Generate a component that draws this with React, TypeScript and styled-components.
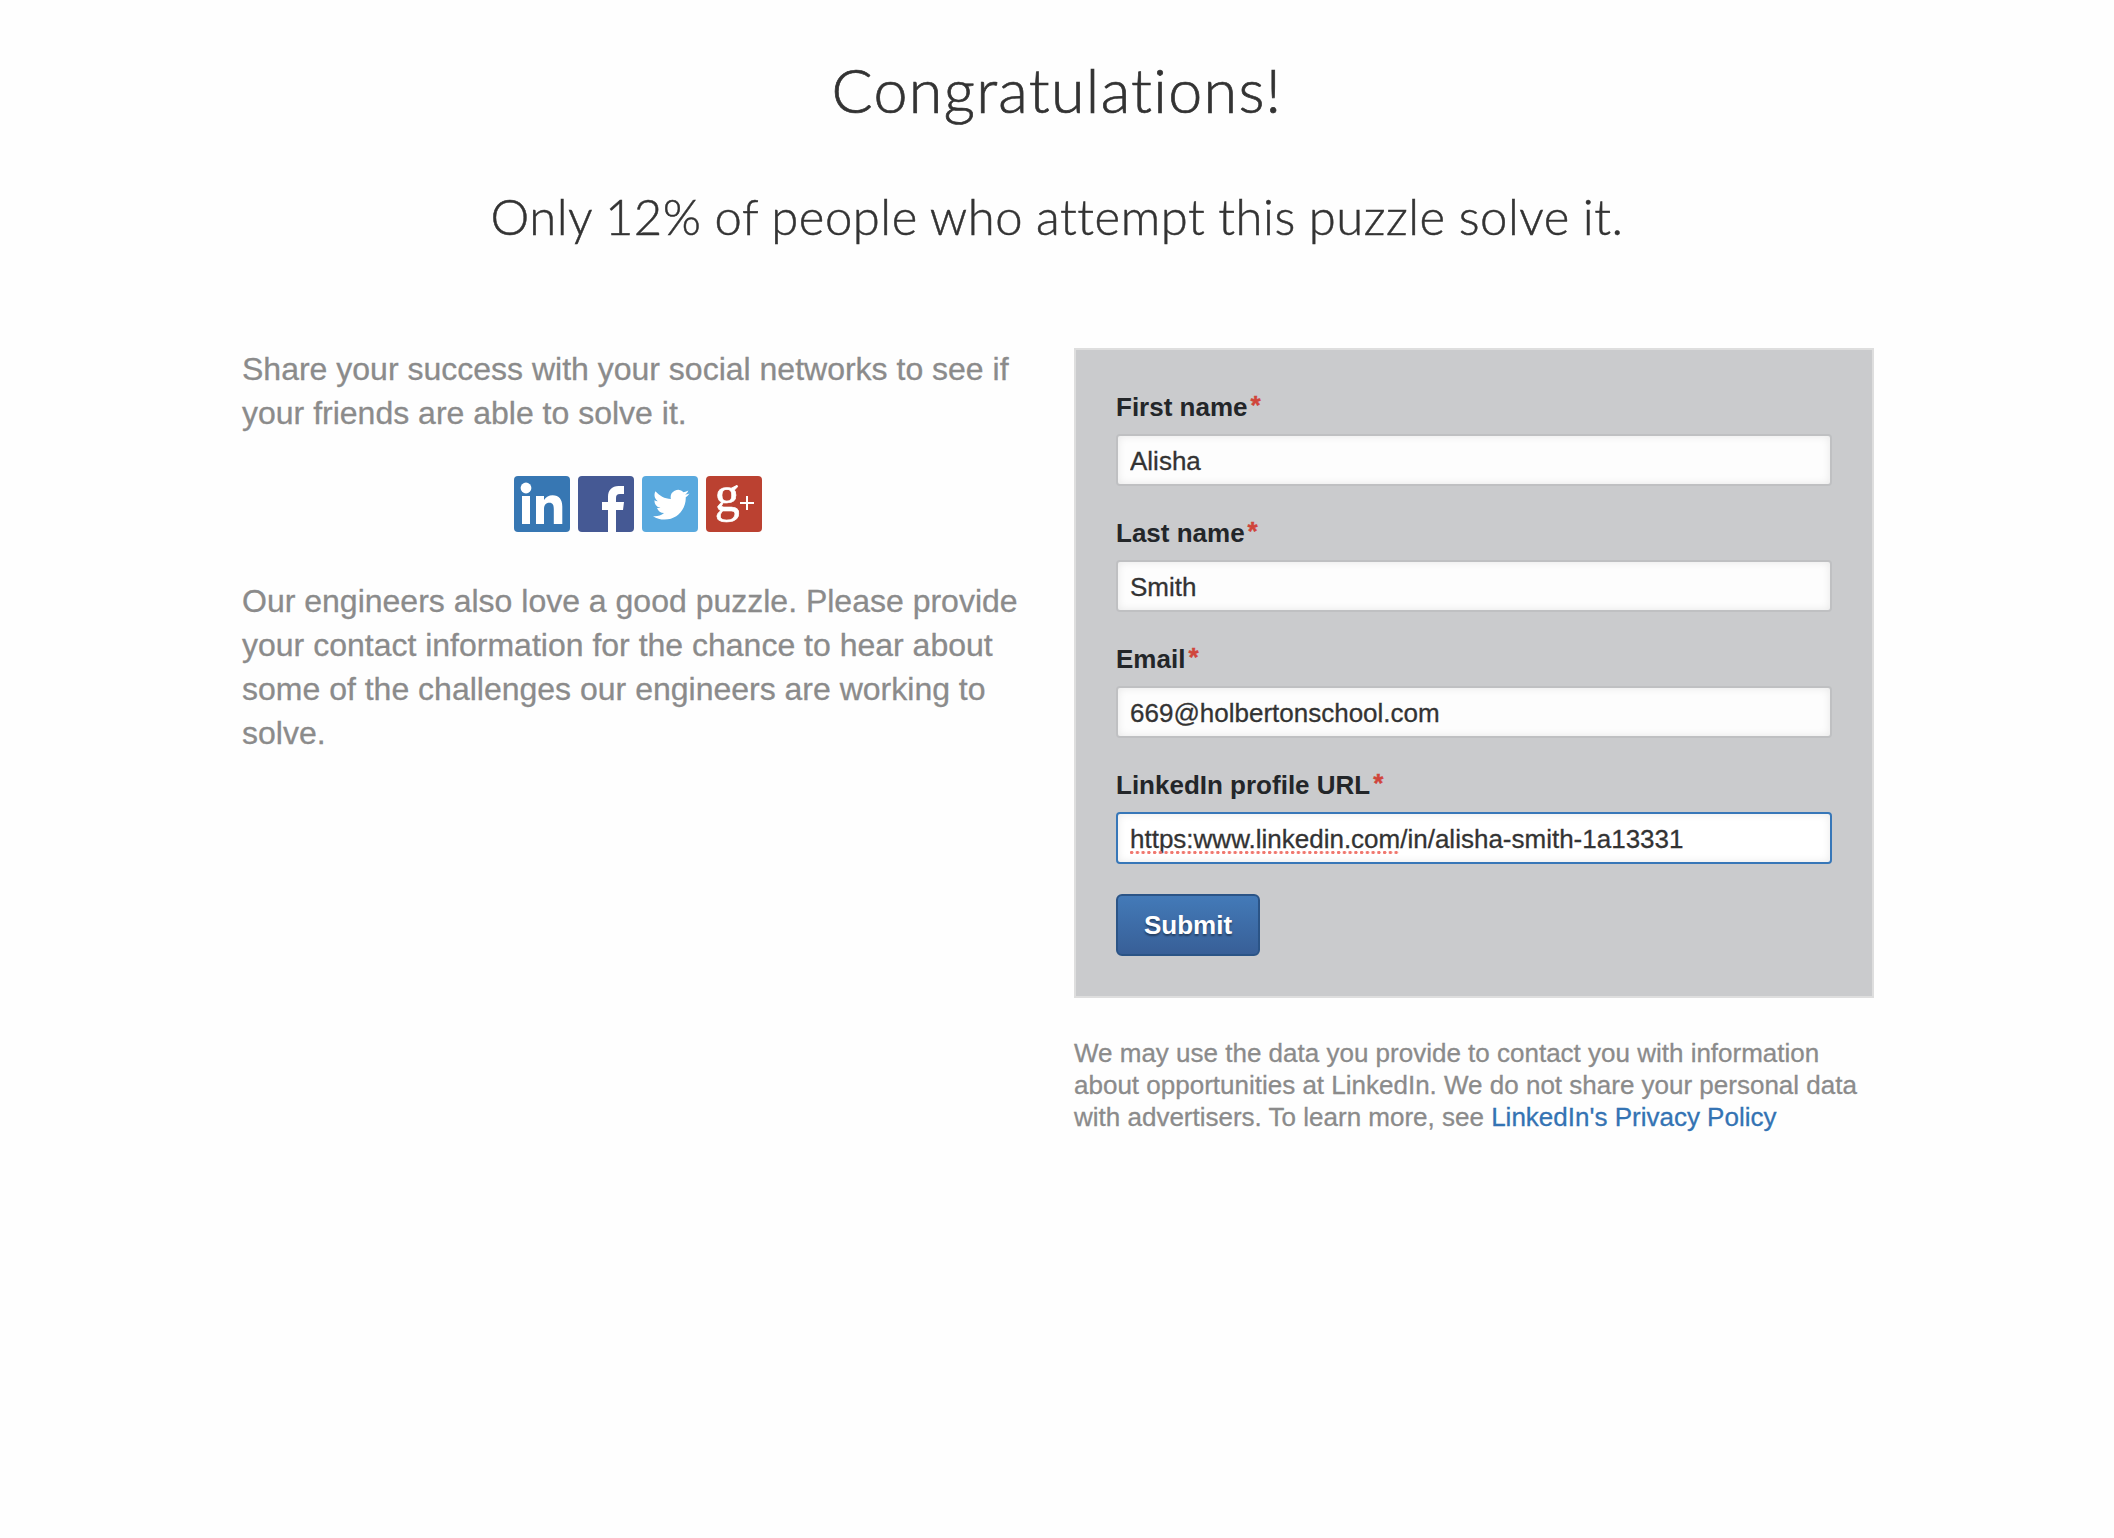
import React from "react";
import styled, { createGlobalStyle } from "styled-components";

const GlobalStyle = createGlobalStyle`
  *, *::before, *::after { box-sizing: border-box; }
  html, body { margin: 0; padding: 0; background: #fefefe; }
  body { font-family: "Liberation Sans", Arial, Helvetica, sans-serif; color: #333; }
`;

const Page = styled.main`
  width: 2114px;
  min-height: 1538px;
  display: flex;
  flex-direction: column;
  align-items: center;
  padding-top: 50px;
`;

const Heading = styled.h1`
  margin: 0;
  font: 300 61px/80px Lato, sans-serif;
  letter-spacing: 1.3px;
  -webkit-text-stroke: 0.7px #333;
  white-space: nowrap;
`;

const SubHeading = styled.h2`
  margin: 54px 0 0;
  font: 300 49px/64px Lato, sans-serif;
  letter-spacing: 0.52px;
  word-spacing: -0.8px;
  -webkit-text-stroke: 0.5px #333;
  white-space: nowrap;
`;

const Columns = styled.div`
  display: grid;
  grid-template-columns: 792px 800px;
  column-gap: 40px;
  width: 1632px;
  margin: 100px 0 0 2px;
  align-items: start;
`;

const ShareColumn = styled.section`
  display: flex;
  flex-direction: column;
`;

const Copy = styled.p<{ $lift?: number }>`
  margin: ${(p) => -(p.$lift ?? 0)}px 0 ${(p) => p.$lift ?? 0}px;
  font-size: 32px;
  line-height: 44px;
  color: #8b8b8b;
  -webkit-text-stroke: 0.3px #8b8b8b;
`;

const Line = styled.span`
  display: block;
  white-space: nowrap;
`;

const ShareRow = styled.nav`
  display: flex;
  justify-content: center;
  gap: 8px;
  padding: 40px 0;
  margin-bottom: 7px;
`;

const ShareLink = styled.a<{ $color: string }>`
  width: 56px;
  height: 56px;
  border-radius: 4px;
  background: ${(p) => p.$color};
  svg { display: block; overflow: visible; }
`;

const FormColumn = styled.section`
  display: flex;
  flex-direction: column;
`;

const Panel = styled.form`
  display: flex;
  flex-direction: column;
  height: 650px;
  border: 2px solid #dedede;
  background: #cacbcd;
  padding: 40px;
`;

const Field = styled.div`
  display: flex;
  flex-direction: column;
  height: 126px;
`;

const Label = styled.label`
  display: flex;
  height: 44px;
  line-height: 34px;
  font-size: 26px;
  font-weight: 700;
  color: #232629;
`;

const Required = styled.span`
  margin-left: 3px;
  line-height: 31px;
  color: #d0453b;
  -webkit-text-stroke: 0.4px #d0453b;
`;

const InputWrap = styled.div`
  position: relative;
  display: flex;
`;

const Input = styled.input<{ $active?: boolean }>`
  width: 100%;
  height: 52px;
  padding: 2px 12px 0;
  border: 2px solid ${(p) => (p.$active ? "#3777b8" : "#bfc0c2")};
  border-radius: 4px;
  outline: none;
  background: ${(p) => (p.$active ? "#ffffff" : "#fdfdfd")};
  box-shadow: inset 0 0 8px rgba(0, 0, 0, 0.09);
  font: 26px/32px "Liberation Sans", Arial, sans-serif;
  color: #333;
  -webkit-text-stroke: 0.3px #333;
`;

const SpellingMark = styled.span`
  position: absolute;
  left: 14px;
  top: 39px;
  width: 270px;
  height: 3px;
  background: radial-gradient(circle at 1.7px 1.5px, #f0776e 1.4px, transparent 2px) 0 0 / 5.76px 3px repeat-x;
`;

const Submit = styled.button`
  width: 144px;
  height: 62px;
  padding: 0;
  border: 2px solid #2b5486;
  border-radius: 6px;
  background: linear-gradient(#437ab8, #385f97);
  font: 700 26px/34px "Liberation Sans", Arial, sans-serif;
  color: #fff;
  text-shadow: 0 2px 2px rgba(0, 0, 0, 0.4);
`;

const Notice = styled.p`
  margin: 39px 0 0;
  font-size: 26px;
  line-height: 32px;
  color: #8b8b8b;
  -webkit-text-stroke: 0.3px;
`;

const PolicyLink = styled.a`
  color: #3473b3;
  text-decoration: none;
`;

const LinkedInMark = () => (
  <svg width="56" height="56" viewBox="0 0 56 56" fill="#fff">
    <circle cx="12" cy="12" r="5.4" />
    <path d="M8 20h8v28H8zM22 20h8v4c2-3.2 5-4.800 8.600-4.800 6.600 0 9.700 4.300 9.700 11.300V48h-8.500V33c0-4-1-6.300-4.400-6.300-3.800 0-5.400 2.500-5.400 6.300v15h-8z" />
  </svg>
);

const FacebookMark = () => (
  <svg width="56" height="56" viewBox="0 0 56 56" fill="#fff">
    <path d="M30 56V34h-6v-8h6v-5c0-7 4-11 10.500-11H46v8h-4c-3 0-4 1.300-4 4v4h8l-1 8h-7v22z" />
  </svg>
);

const TwitterMark = () => (
  <svg width="56" height="56" viewBox="0 0 56 56" fill="#fff">
    <path
      transform="translate(11 10.500) scale(1.52)"
      d="M23.953 4.570a10 10 0 01-2.825.775 4.958 4.958 0 002.163-2.723c-.951.555-2.005.959-3.127 1.184a4.920 4.920 0 00-8.384 4.482C7.690 8.095 4.067 6.130 1.640 3.162a4.822 4.822 0 00-.666 2.475c0 1.710.870 3.213 2.188 4.096a4.904 4.904 0 01-2.228-.616v.060a4.923 4.923 0 003.946 4.827 4.996 4.996 0 01-2.212.085 4.936 4.936 0 004.604 3.417 9.867 9.867 0 01-6.102 2.105c-.390 0-.779-.023-1.170-.067a13.995 13.995 0 007.557 2.209c9.053 0 13.998-7.496 13.998-13.985 0-.210 0-.420-.015-.630A9.935 9.935 0 0024 4.590z"
    />
  </svg>
);

const GooglePlusMark = () => (
  <svg width="56" height="56" viewBox="0 0 56 56" fill="#fff">
    <text x="8.800" y="35" fontFamily="Liberation Serif, serif" fontSize="50" stroke="#fff" strokeWidth="0.600">g</text>
    <path d="M40 20h2v6h6v2h-6v6h-2v-6h-6v-2h6z" />
  </svg>
);

const networks = [
  { name: "LinkedIn", color: "#3777b3", Mark: LinkedInMark },
  { name: "Facebook", color: "#455994", Mark: FacebookMark },
  { name: "Twitter", color: "#59a9de", Mark: TwitterMark },
  { name: "Google+", color: "#bb4131", Mark: GooglePlusMark },
];

const fields = [
  { id: "first", label: "First name", value: "Alisha" },
  { id: "last", label: "Last name", value: "Smith" },
  { id: "email", label: "Email", value: "669@holbertonschool.com" },
  { id: "url", label: "LinkedIn profile URL", value: "https:www.linkedin.com/in/alisha-smith-1a13331", active: true },
];

export default function App() {
  return (
    <>
      <GlobalStyle />
      <Page>
        <Heading>Congratulations!</Heading>
        <SubHeading>Only 12% of people who attempt this puzzle solve it.</SubHeading>
        <Columns>
          <ShareColumn>
            <Copy $lift={1}>
              <Line>Share your success with your social networks to see if</Line>
              <Line>your friends are able to solve it.</Line>
            </Copy>
            <ShareRow>
              {networks.map(({ name, color, Mark }) => (
                <ShareLink key={name} $color={color} aria-label={name}>
                  <Mark />
                </ShareLink>
              ))}
            </ShareRow>
            <Copy>
              <Line>Our engineers also love a good puzzle. Please provide</Line>
              <Line>your contact information for the chance to hear about</Line>
              <Line>some of the challenges our engineers are working to</Line>
              <Line>solve.</Line>
            </Copy>
          </ShareColumn>
          <FormColumn>
            <Panel onSubmit={(e) => e.preventDefault()}>
              {fields.map((f) => (
                <Field key={f.id}>
                  <Label htmlFor={f.id}>
                    {f.label}
                    <Required>*</Required>
                  </Label>
                  <InputWrap>
                    <Input id={f.id} defaultValue={f.value} $active={f.active} spellCheck={false} />
                    {f.active && <SpellingMark />}
                  </InputWrap>
                </Field>
              ))}
              <Submit type="submit">Submit</Submit>
            </Panel>
            <Notice>
              <Line>We may use the data you provide to contact you with information</Line>
              <Line>about opportunities at LinkedIn. We do not share your personal data</Line>
              <Line>
                with advertisers. To learn more, see <PolicyLink>LinkedIn's Privacy Policy</PolicyLink>
              </Line>
            </Notice>
          </FormColumn>
        </Columns>
      </Page>
    </>
  );
}
